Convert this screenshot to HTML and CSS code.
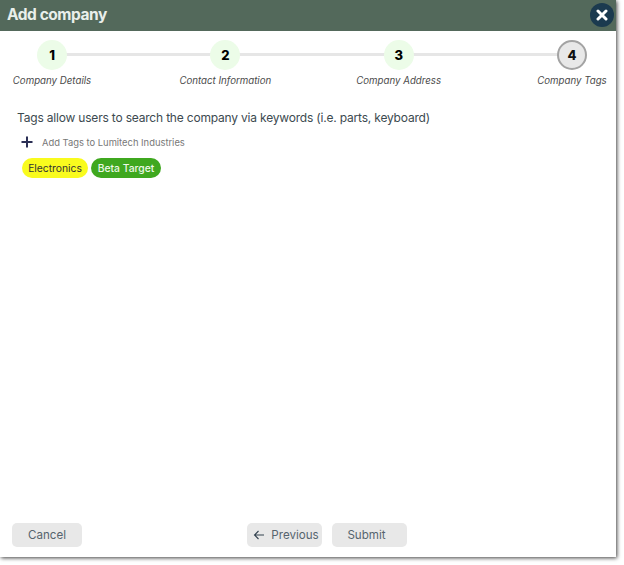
FILE: index.html
```html
<!DOCTYPE html>
<html lang="en">
<head>
<meta charset="utf-8">
<title>Add company</title>
<link rel="stylesheet" href="styles.css">
</head>
<body>
<div class="dialog">
  <header class="header">
    <h1 class="title">Add company</h1>
    <button class="close" aria-label="Close">
      <svg width="12" height="12" viewBox="0 0 12 12"><path d="M2 2l8 8M10 2l-8 8" stroke="#fff" stroke-width="3" stroke-linecap="round"/></svg>
    </button>
  </header>
  <ol class="stepper">
    <li class="step"><span class="dot">1</span><span class="label">Company Details</span></li>
    <li class="step"><span class="dot">2</span><span class="label">Contact Information</span></li>
    <li class="step"><span class="dot">3</span><span class="label">Company Address</span></li>
    <li class="step"><span class="dot current">4</span><span class="label">Company Tags</span></li>
  </ol>
  <main class="content">
    <p class="intro">Tags allow users to search the company via keywords (i.e. parts, keyboard)</p>
    <div class="add-row">
      <svg class="plus" width="12" height="12" viewBox="0 0 12 12"><path d="M6 .5v11M.5 6h11" stroke="#2b2f55" stroke-width="2"/></svg>
      <span>Add Tags to Lumitech Industries</span>
    </div>
    <div class="tags">
      <span class="tag yellow">Electronics</span>
      <span class="tag green">Beta Target</span>
    </div>
  </main>
  <footer class="footer">
    <button class="btn cancel">Cancel</button>
    <button class="btn previous">
      <svg width="12" height="10" viewBox="0 0 12 10"><path d="M11 5H1.5M5.5 1L1.5 5l4 4" fill="none" stroke="#33424f" stroke-width="1.1"/></svg>
      Previous
    </button>
    <button class="btn submit">Submit</button>
  </footer>
</div>
</body>
</html>
```
FILE: styles.css
```css
* { box-sizing: border-box; }
html, body { margin: 0; padding: 0; background: #fff; }
body { font-family: Inter, "Liberation Sans", sans-serif; width: 624px; height: 565px; overflow: hidden; }

.dialog {
  width: 616px;
  height: 557px;
  background: #fff;
  box-shadow: 1px 1px 4px rgba(0, 0, 0, .75);
  display: flex;
  flex-direction: column;
}

.header {
  height: 31px;
  flex: none;
  background: #53695b;
  display: flex;
  align-items: center;
  justify-content: space-between;
  padding: 0 2px 2px 7px;
}
.title { margin: 0; font-size: 15.5px; font-weight: 700; letter-spacing: -.45px; color: #e9efeb; }
.close {
  width: 24px; height: 24px; padding: 0; border: 0; border-radius: 50%;
  background: #1b3a4f;
  display: flex; align-items: center; justify-content: center;
}

.stepper {
  list-style: none;
  margin: 9px 0 0;
  padding: 0 0 0 8px;
  display: flex;
  gap: 85.33px;
  position: relative;
}
.stepper::before {
  content: "";
  position: absolute;
  left: 52px; width: 520px; top: 13px; height: 3px;
  background: #e6e6e6;
}
.step { width: 88px; flex: none; display: flex; flex-direction: column; align-items: center; position: relative; }
.dot {
  width: 30px; height: 30px; border-radius: 50%;
  background: #ecfce8;
  display: flex; align-items: center; justify-content: center;
  font-size: 13px; font-weight: 800; color: #000;
}
.dot.current { background: #e8e8e8; border: 2px solid #a3a3a3; color: #111; }
.label {
  margin-top: 5px;
  font-size: 9.7px; line-height: 12px; font-style: italic; color: #4a4a4a;
  white-space: nowrap;
}

.content { padding: 23px 0 0 17px; }
.intro { margin: 0; font-size: 12px; line-height: 16px; letter-spacing: -.19px; color: #3c4a50; }
.add-row {
  display: flex; align-items: center; gap: 9px;
  margin: 9px 0 0 4px; height: 14px;
  font-size: 9.4px; color: #777;
}
.tags { display: flex; gap: 3px; margin: 9px 0 0 5px; }
.tag {
  height: 20px; border-radius: 10px;
  display: flex; align-items: center; justify-content: center;
  font-size: 10.3px;
}
.yellow { width: 66px; background: #f9fb1e; color: #333; }
.green { width: 70px; background: #3fa81f; color: #eef8e8; font-weight: 500; }

.footer {
  margin-top: auto;
  padding: 0 0 10px 12px;
  display: flex;
}
.btn {
  height: 24px; border: 0; border-radius: 5px; padding: 0;
  background: #e8e8e8; color: #56646e;
  font: 400 11.6px Inter, "Liberation Sans", sans-serif;
  display: flex; align-items: center; justify-content: center; gap: 6px;
}
.cancel { width: 70px; }
.previous { width: 75px; margin-left: 165px; padding-left: 3px; }
.submit { width: 75px; margin-left: 10px; padding-right: 6px; }
```
